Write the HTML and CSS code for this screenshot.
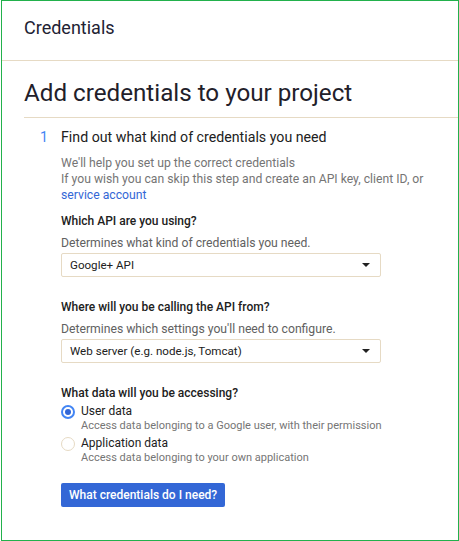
FILE: index.html
```html
<!DOCTYPE html>
<html>
<head>
<meta charset="utf-8">
<link rel="stylesheet" href="styles.css">
</head>
<body>
<div class="frame">
  <div class="header">Credentials</div>
  <div class="content">
    <h1 class="title">Add credentials to your project</h1>
    <div class="step">
      <div class="step-num">1</div>
      <div class="step-body">
        <div class="step-title">Find out what kind of credentials you need</div>
        <p class="desc">We'll help you set up the correct credentials<br>If you wish you can skip this step and create an API key, client ID, or <span class="link">service account</span></p>

        <div class="label label-first">Which API are you using?</div>
        <div class="hint">Determines what kind of credentials you need.</div>
        <div class="select"><span>Google+ API</span><span class="arrow"></span></div>

        <div class="label">Where will you be calling the API from?</div>
        <div class="hint">Determines which settings you'll need to configure.</div>
        <div class="select"><span>Web server (e.g. node.js, Tomcat)</span><span class="arrow"></span></div>

        <div class="label">What data will you be accessing?</div>
        <div class="radio-group">
          <div class="radio">
            <span class="circle checked"></span>
            <div class="radio-text">
              <div class="radio-label">User data</div>
              <div class="radio-sub">Access data belonging to a Google user, with their permission</div>
            </div>
          </div>
          <div class="radio">
            <span class="circle"></span>
            <div class="radio-text">
              <div class="radio-label">Application data</div>
              <div class="radio-sub">Access data belonging to your own application</div>
            </div>
          </div>
        </div>

        <button class="btn">What credentials do I need?</button>
      </div>
    </div>
  </div>
</div>
</body>
</html>
```

FILE: styles.css
```css
html, body {
  margin: 0;
  padding: 0;
  background: #ffffff;
}
body {
  font-family: Roboto, "Liberation Sans", Arial, sans-serif;
  color: #212121;
}
.frame {
  box-sizing: border-box;
  width: 458px;
  height: 541px;
  margin-left: 1px;
  border: 1px solid #22b14c;
  overflow: hidden;
}
.header {
  box-sizing: border-box;
  height: 60px;
  padding: 16px 0 0 24px;
  margin-left: -2px;
  font-size: 18px;
  line-height: 22px;
  color: #222233;
  border-bottom: 1px solid #e6dac4;
}
.content {
  padding-left: 22px;
}
.title {
  margin: 17px 0 0 0;
  padding-bottom: 9px;
  font-size: 24.2px;
  font-weight: 400;
  line-height: 30px;
  color: #22202a;
  border-bottom: 1px solid #e6dac4;
}
.step {
  display: grid;
  grid-template-columns: 21px 1fr;
  padding-left: 16px;
  margin-top: 9px;
}
.step-num {
  font-size: 14.2px;
  line-height: 20px;
  color: #4285f4;
}
.step-title {
  font-size: 14.2px;
  line-height: 20px;
}
.desc {
  margin: 8px 0 0 0;
  font-size: 12.2px;
  line-height: 16px;
  color: #757575;
}
.link {
  color: #3367d6;
}
.label {
  margin-top: 22px;
  font-size: 12px;
  line-height: 16px;
  font-weight: 500;
  color: #212121;
}
.label-first {
  margin-top: 10px;
}
.hint {
  margin-top: 6px;
  font-size: 12.2px;
  line-height: 16px;
  color: #616161;
}
.select {
  box-sizing: border-box;
  width: 320px;
  height: 24px;
  margin-top: 2px;
  padding: 0 10px 1px 8px;
  display: flex;
  align-items: center;
  justify-content: space-between;
  border: 1px solid #e6dac4;
  border-radius: 2px;
  font-size: 11.6px;
  color: #212121;
}
.arrow {
  width: 0;
  height: 0;
  border-left: 4px solid transparent;
  border-right: 4px solid transparent;
  border-top: 4px solid #212121;
}
.radio-group {
  margin-top: 2px;
}
.radio {
  display: flex;
  align-items: flex-start;
  margin-bottom: 2px;
}
.circle {
  box-sizing: border-box;
  flex: 0 0 auto;
  width: 14px;
  height: 14px;
  margin-top: 2px;
  margin-right: 6px;
  border-radius: 50%;
  border: 1px solid #e6dac4;
  position: relative;
}
.circle.checked {
  border: 2px solid #4285f4;
}
.circle.checked::after {
  content: "";
  position: absolute;
  left: 2px;
  top: 2px;
  width: 6px;
  height: 6px;
  border-radius: 50%;
  background: #3367d6;
}
.radio-label {
  font-size: 12px;
  line-height: 16px;
}
.radio-sub {
  font-size: 11px;
  line-height: 14px;
  color: #757575;
}
.btn {
  display: block;
  margin-top: 18px;
  height: 24px;
  padding: 0 8px;
  border: none;
  border-radius: 2px;
  background: #3367d6;
  color: #ffffff;
  font-family: Roboto, "Liberation Sans", Arial, sans-serif;
  font-size: 12px;
  font-weight: 500;
  line-height: 24px;
}
```
